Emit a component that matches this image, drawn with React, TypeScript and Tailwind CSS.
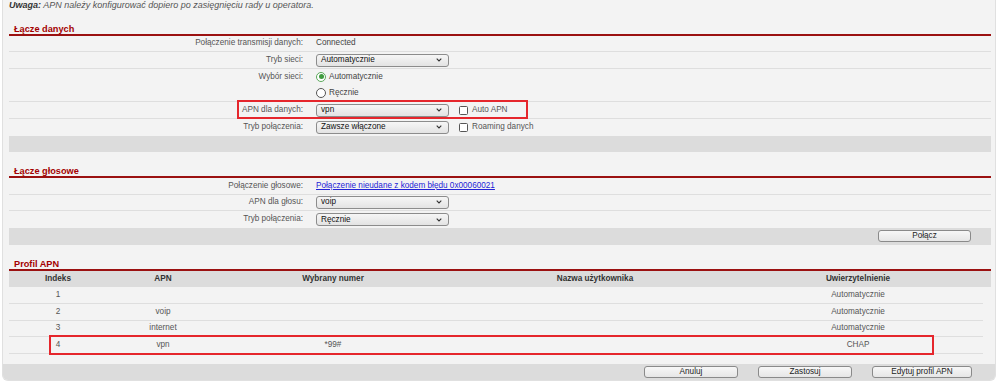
import React from "react";

type RowProps = {
  label?: string;
  children?: React.ReactNode;
  className?: string;
};

function Row({ label, children, className = "" }: RowProps) {
  return (
    <div className={`relative flex items-center h-[16.7px] border-b border-[#dedede] ${className}`}>
      <div className="w-[294px] shrink-0 text-right text-[#555]">{label}</div>
      <div className="ml-[13px] flex items-center text-[#444]">{children}</div>
    </div>
  );
}

function Select({ value }: { value: string }) {
  return (
    <div className="w-[133px] h-[13px] flex items-center justify-between pl-[4px] pr-[6px] border border-[#8c8c8c] rounded-[3px] bg-linear-to-b from-[#f6f6f6] to-[#e3e3e3] text-[#111]">
      <span>{value}</span>
      <svg width="6" height="4" viewBox="0 0 6 4">
        <path d="M0.7 0.7 L3 3 L5.3 0.7" stroke="#333" strokeWidth="1.1" fill="none" />
      </svg>
    </div>
  );
}

function Check({ label }: { label: string }) {
  return (
    <div className="ml-[10px] flex items-center">
      <span className="w-[9px] h-[9px] border border-[#555] rounded-[1.5px] bg-white" />
      <span className="ml-[4px] text-[#555]">{label}</span>
    </div>
  );
}

function Radio({ checked, label }: { checked?: boolean; label: string }) {
  return (
    <div className="flex items-center">
      {checked ? (
        <span className="w-[10px] h-[10px] rounded-full border border-[#5aa85a] bg-white flex items-center justify-center">
          <span className="w-[5px] h-[5px] rounded-full bg-[#3f9b3f]" />
        </span>
      ) : (
        <span className="w-[10px] h-[10px] rounded-full border border-[#555] bg-white" />
      )}
      <span className="ml-[3px] text-[#444]">{label}</span>
    </div>
  );
}

function Button({ label, w = "w-[94px]" }: { label: string; w?: string }) {
  return (
    <button className={`${w} h-[12px] flex items-center justify-center border border-[#8a8a8a] rounded-[3px] bg-linear-to-b from-[#f7f7f7] to-[#e6e6e6] text-[#222] text-[8.2px] leading-none`}>
      {label}
    </button>
  );
}

function Heading({ title, h }: { title: string; h: string }) {
  return (
    <div className={`${h} flex items-end pl-[5px] border-b-2 border-[#9b1111]`}>
      <span className="font-bold text-[#a30000] text-[9.2px] leading-[9px]">{title}</span>
    </div>
  );
}

const profiles = [
  { idx: "1", apn: "", num: "", user: "", auth: "Automatycznie" },
  { idx: "2", apn: "voip", num: "", user: "", auth: "Automatycznie" },
  { idx: "3", apn: "internet", num: "", user: "", auth: "Automatycznie" },
  { idx: "4", apn: "vpn", num: "*99#", user: "", auth: "CHAP" },
];

export default function App() {
  return (
    <div className="w-[999px] h-[389px] bg-white overflow-hidden font-['Liberation_Sans',Arial,sans-serif] text-[8.2px]">
      <div className="ml-[2px] w-[994px] bg-[#f3f3f3] border-x border-b border-[#e0e0e0] rounded-b-[6px] overflow-hidden">
        <div className="pl-[6px] pr-[4px]">
          <div className="h-[10px] leading-[10px] italic text-[#555] text-[9px]">
            <span className="font-bold text-[#333]">Uwaga:</span> APN należy konfigurować dopiero po zasięgnięciu rady u operatora.
          </div>

          {/* Łącze danych */}
          <Heading title="Łącze danych" h="h-[25.5px]" />
          <Row label="Połączenie transmisji danych:">Connected</Row>
          <Row label="Tryb sieci:">
            <Select value="Automatycznie" />
          </Row>
          <div className="flex h-[33.4px] border-b border-[#dedede]">
            <div className="w-[294px] shrink-0 h-[16.7px] flex items-center justify-end text-[#555]">Wybór sieci:</div>
            <div className="ml-[13px] flex flex-col">
              <div className="h-[16.7px] flex items-center">
                <Radio checked label="Automatycznie" />
              </div>
              <div className="h-[16.7px] flex items-center">
                <Radio label="Ręcznie" />
              </div>
            </div>
          </div>
          <Row label="APN dla danych:">
            <Select value="vpn" />
            <Check label="Auto APN" />
            <div className="absolute left-[228px] top-[-2px] w-[291px] h-[19px] border-2 border-[#e5262c]" />
          </Row>
          <Row label="Tryb połączenia:" className="border-b-0">
            <Select value="Zawsze włączone" />
            <Check label="Roaming danych" />
          </Row>
          <div className="h-[16.7px] bg-[#dcdcdc]" />

          {/* Łącze głosowe */}
          <Heading title="Łącze głosowe" h="h-[25.6px]" />
          <Row label="Połączenie głosowe:">
            <span className="text-[#2323d6] underline">Połączenie nieudane z kodem błędu 0x00060021</span>
          </Row>
          <Row label="APN dla głosu:">
            <Select value="voip" />
          </Row>
          <Row label="Tryb połączenia:" className="border-b-0">
            <Select value="Ręcznie" />
          </Row>
          <div className="h-[16.7px] bg-[#dcdcdc] flex items-center justify-end pr-[20px]">
            <Button label="Połącz" w="w-[93px]" />
          </div>

          {/* Profil APN */}
          <Heading title="Profil APN" h="h-[26px]" />
          <div className="grid grid-cols-[98px_112px_228px_296px_230px] h-[16.7px] items-center bg-[#dcdcdc] font-bold text-[#333] text-center">
            <div>Indeks</div>
            <div>APN</div>
            <div>Wybrany numer</div>
            <div>Nazwa użytkownika</div>
            <div>Uwierzytelnienie</div>
          </div>
          <div className="mr-[8px]">
            {profiles.map((p) => (
              <div
                key={p.idx}
                className="relative grid grid-cols-[98px_112px_228px_296px_230px] h-[16.7px] items-center border-b border-[#dedede] text-[#555] text-center"
              >
                <div>{p.idx}</div>
                <div>{p.apn}</div>
                <div>{p.num}</div>
                <div>{p.user}</div>
                <div>{p.auth}</div>
                {p.idx === "4" && (
                  <div className="absolute left-[40px] top-[-2px] w-[885px] h-[20px] border-2 border-[#e5262c]" />
                )}
              </div>
            ))}
          </div>
          <div className="h-[9.5px]" />
        </div>
        <div className="h-[16px] bg-[#dcdcdc] flex items-center justify-end gap-[20px] pr-[23px]">
          <Button label="Anuluj" />
          <Button label="Zastosuj" />
          <Button label="Edytuj profil APN" w="w-[100px]" />
        </div>
      </div>
    </div>
  );
}
